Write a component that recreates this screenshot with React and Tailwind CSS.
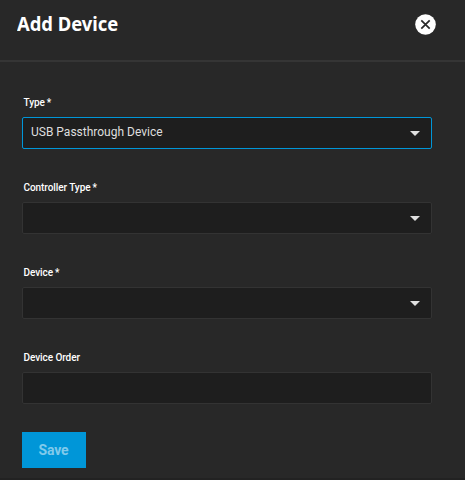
const fields = [
  { label: "Type", required: true, value: "USB Passthrough Device", select: true, focused: true },
  { label: "Controller Type", required: true, value: "", select: true },
  { label: "Device", required: true, value: "", select: true },
  { label: "Device Order", value: "" },
];

function Field({ label, required, value, select, focused }) {
  return (
    <div className="flex flex-col">
      <label className="mb-[5px] flex h-[18px] gap-[2px] pl-[1.5px] text-[10px] leading-[18px] font-medium tracking-[-0.07px] text-white">
        <span>{label}</span>
        {required && <span>*</span>}
      </label>
      <div
        className={`flex h-8 w-[410px] items-center justify-between rounded-[2px] border bg-[#1e1e1e] pr-[11px] pl-2 ${
          focused ? "border-[#0096d8]" : "border-[#333333]"
        }`}
      >
        <span className="relative -top-px text-[12px] leading-4 text-[#dedede]">{value}</span>
        {select && (
          <svg width="10" height="5" viewBox="0 0 10 5" className="mt-px">
            <path d="M0 0h10L5 5z" fill="#e0e0e0" />
          </svg>
        )}
      </div>
    </div>
  );
}

export default function App() {
  return (
    <div className="flex h-[480px] w-[465px] flex-col border-b-2 border-[#222222] bg-[#282828] font-['Roboto',sans-serif]">
      <header className="flex h-[62px] shrink-0 items-start justify-between border-b-2 border-[#353535] pt-[9px] pr-[29.5px] pl-[17px]">
        <h1 className="origin-left scale-x-[0.92] font-['Noto_Sans',sans-serif] text-[20px] leading-[30px] font-bold whitespace-nowrap text-white">
          Add Device
        </h1>
        <button type="button" aria-label="Close" className="mt-[4.5px]">
          <svg width="21" height="21" viewBox="0 0 21 21" className="block">
            <circle cx="10.5" cy="10.5" r="10.3" fill="#fff" />
            <path d="M6.3 6.3l8.4 8.4M14.7 6.3l-8.4 8.4" stroke="#282828" strokeWidth="1.7" fill="none" />
          </svg>
        </button>
      </header>
      <form className="flex flex-col items-start pt-8 pl-[22px]">
        <div className="flex flex-col gap-[30px]">
          {fields.map((f) => (
            <Field key={f.label} {...f} />
          ))}
        </div>
        <button
          type="button"
          className="mt-7 h-9 w-16 bg-[#0096d8] pr-px text-[14px] leading-[37px] font-bold tracking-[-0.1px] text-[#80caeb]"
        >
          Save
        </button>
      </form>
    </div>
  );
}
